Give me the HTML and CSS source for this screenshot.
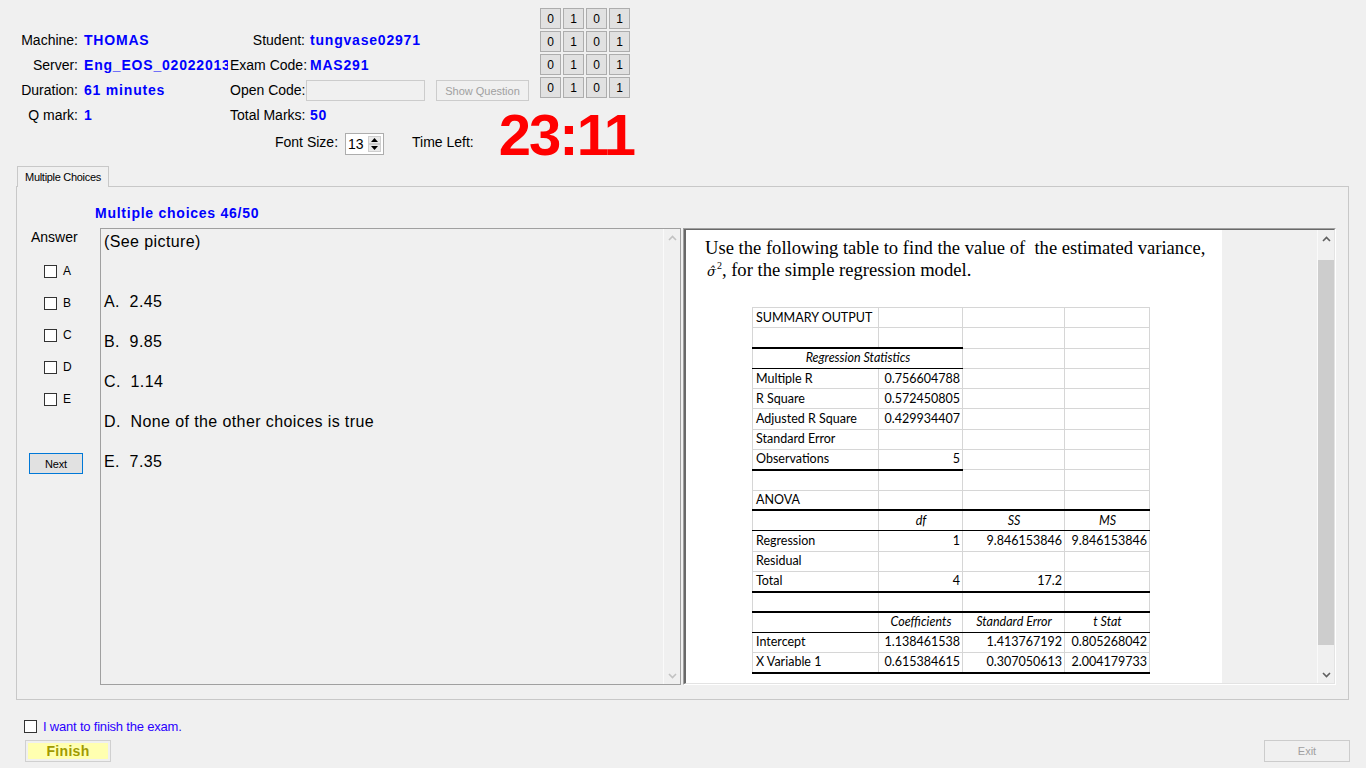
FILE: index.html
```html
<!DOCTYPE html>
<html>
<head>
<meta charset="utf-8">
<title>Exam</title>
<link rel="stylesheet" href="styles.css">
</head>
<body>
<header class="top">
  <div class="top-left">
    <div class="info">
      <span class="lbl">Machine:</span><span class="val c1">THOMAS</span><span class="lbl">Student:</span><span class="val c2">tungvase02971</span>
      <span class="lbl">Server:</span><span class="val c1">Eng_EOS_02022013</span><span class="lbl">Exam Code:</span><span class="val c2">MAS291</span>
      <span class="lbl">Duration:</span><span class="val c1">61 minutes</span><span class="lbl">Open Code:</span><span class="oc"><span class="oc-input"></span><button class="btn-dis">Show Question</button></span>
      <span class="lbl">Q mark:</span><span class="val c1">1</span><span class="lbl">Total Marks:</span><span class="val c2">50</span>
    </div>
    <div class="font-row">
      <span class="fr-lbl">Font Size:</span>
      <span class="spin"><span class="spin-val">13</span><span class="spin-btns"><span class="sb"><svg width="7" height="4" viewBox="0 0 7 4"><path d="M0 4 L3.5 0 L7 4 Z" fill="#000"/></svg></span><span class="sb"><svg width="7" height="4" viewBox="0 0 7 4"><path d="M0 0 L3.5 4 L7 0 Z" fill="#000"/></svg></span></span></span>
      <span class="fr-lbl time-lbl">Time Left:</span>
    </div>
  </div>
  <div class="top-right">
    <div class="bits">
      <span class="bit">0</span><span class="bit">1</span><span class="bit">0</span><span class="bit">1</span>
      <span class="bit">0</span><span class="bit">1</span><span class="bit">0</span><span class="bit">1</span>
      <span class="bit">0</span><span class="bit">1</span><span class="bit">0</span><span class="bit">1</span>
      <span class="bit">0</span><span class="bit">1</span><span class="bit">0</span><span class="bit">1</span>
    </div>
    <div class="timer">23:11</div>
  </div>
</header>

<section class="tabs">
  <div class="tab">Multiple Choices</div>
  <div class="panel">
    <div class="mc-title">Multiple choices 46/50</div>
    <div class="mc-body">
      <div class="answers">
        <div class="ans-title">Answer</div>
        <div class="opt"><span class="chk"></span><span class="opt-l">A</span></div>
        <div class="opt"><span class="chk"></span><span class="opt-l">B</span></div>
        <div class="opt"><span class="chk"></span><span class="opt-l">C</span></div>
        <div class="opt"><span class="chk"></span><span class="opt-l">D</span></div>
        <div class="opt"><span class="chk"></span><span class="opt-l">E</span></div>
        <button class="next">Next</button>
      </div>
      <div class="qbox">
        <div class="qtext">(See picture)


A.  2.45

B.  9.85

C.  1.14

D.  None of the other choices is true

E.  7.35</div>
        <div class="vscroll dis">
          <span class="arr"><svg width="9" height="6" viewBox="0 0 9 6"><path d="M1 5 L4.5 1.5 L8 5" fill="none" stroke="#c2c2c2" stroke-width="1.6"/></svg></span>
          <span class="track"></span>
          <span class="arr"><svg width="9" height="6" viewBox="0 0 9 6"><path d="M1 1 L4.5 4.5 L8 1" fill="none" stroke="#c2c2c2" stroke-width="1.6"/></svg></span>
        </div>
      </div>
      <div class="pic">
        <div class="pic-in">
          <div class="image">
            <div class="ptext">Use the following table to find the value of&nbsp; the estimated variance,<br><span class="sig">σ̂</span><sup>2</sup>, for the simple regression model.</div>
            <table class="xl">
              <colgroup><col class="w1"><col class="w2"><col class="w3"><col class="w4"></colgroup>
              <tr><td>SUMMARY OUTPUT</td><td></td><td></td><td></td></tr>
              <tr><td></td><td></td><td></td><td></td></tr>
              <tr><td colspan="2" class="hd top2 bot1">Regression Statistics</td><td></td><td></td></tr>
              <tr><td>Multiple R</td><td class="n">0.756604788</td><td></td><td></td></tr>
              <tr><td>R Square</td><td class="n">0.572450805</td><td></td><td></td></tr>
              <tr><td>Adjusted R Square</td><td class="n">0.429934407</td><td></td><td></td></tr>
              <tr><td>Standard Error</td><td></td><td></td><td></td></tr>
              <tr><td class="bot2">Observations</td><td class="n bot2">5</td><td></td><td></td></tr>
              <tr><td></td><td></td><td></td><td></td></tr>
              <tr><td>ANOVA</td><td></td><td></td><td></td></tr>
              <tr class="hdr"><td></td><td class="hd">df</td><td class="hd">SS</td><td class="hd">MS</td></tr>
              <tr><td>Regression</td><td class="n">1</td><td class="n">9.846153846</td><td class="n">9.846153846</td></tr>
              <tr><td>Residual</td><td></td><td></td><td></td></tr>
              <tr class="end"><td>Total</td><td class="n">4</td><td class="n">17.2</td><td></td></tr>
              <tr><td></td><td></td><td></td><td></td></tr>
              <tr class="hdr"><td></td><td class="hd">Coefficients</td><td class="hd">Standard Error</td><td class="hd">t Stat</td></tr>
              <tr><td>Intercept</td><td class="n">1.138461538</td><td class="n">1.413767192</td><td class="n">0.805268042</td></tr>
              <tr class="end"><td>X Variable 1</td><td class="n">0.615384615</td><td class="n">0.307050613</td><td class="n">2.004179733</td></tr>
            </table>
          </div>
          <div class="filler"></div>
          <div class="vscroll">
            <span class="arr"><svg width="9" height="6" viewBox="0 0 9 6"><path d="M1 5 L4.5 1.5 L8 5" fill="none" stroke="#606060" stroke-width="1.6"/></svg></span>
            <span class="track"><span class="thumb"></span></span>
            <span class="arr"><svg width="9" height="6" viewBox="0 0 9 6"><path d="M1 1 L4.5 4.5 L8 1" fill="none" stroke="#606060" stroke-width="1.6"/></svg></span>
          </div>
        </div>
      </div>
    </div>
  </div>
</section>

<footer class="bottom">
  <div class="fin-row"><span class="chk"></span><span class="fin-lbl">I want to finish the exam.</span></div>
  <div class="btn-row">
    <button class="finish"><span class="finish-in">Finish</span></button>
    <button class="exit">Exit</button>
  </div>
</footer>
</body>
</html>
```

FILE: styles.css
```css
* { box-sizing: border-box; }
html, body { margin: 0; padding: 0; }
body {
  width: 1366px;
  height: 768px;
  overflow: hidden;
  background: #f0f0f0;
  font-family: "Liberation Sans", Arial, sans-serif;
  font-size: 14px;
  color: #000;
}
button { font-family: "Liberation Sans", Arial, sans-serif; padding: 0; margin: 0; }

/* ---------- header ---------- */
.top { display: flex; height: 166px; }
.top-left { width: 540px; }
.info {
  display: grid;
  grid-template-columns: 78px 152px 75px auto;
  grid-auto-rows: 25px;
  margin-top: 28px;
}
.lbl { text-align: right; line-height: 25px; white-space: nowrap; }
.val {
  color: #0000ff;
  font-weight: bold;
  letter-spacing: 0.8px;
  line-height: 25px;
  white-space: nowrap;
  overflow: hidden;
}
.val.c1 { padding-left: 6px; margin-right: 2px; }
.val.c2 { padding-left: 5px; }
.oc { display: flex; align-items: center; padding-left: 1px; }
.oc-input {
  width: 119px;
  height: 21px;
  border: 1px solid #cccccc;
  background: #f0f0f0;
}
.btn-dis {
  margin-left: 11px;
  width: 93px;
  height: 21px;
  border: 1px solid #cccccc;
  background: #f0f0f0;
  color: #a0a0a0;
  font-size: 11px;
}
.font-row {
  display: flex;
  align-items: flex-start;
  height: 22px;
  margin-top: 5px;
  margin-left: 275px;
}
.fr-lbl { line-height: 18px; }
.spin {
  margin-left: 7px;
  width: 39px;
  height: 22px;
  border: 1px solid #adadad;
  background: #fff;
  display: flex;
}
.spin-val { flex: 1; padding-left: 2px; line-height: 20px; }
.spin-btns {
  width: 13px;
  margin: 2px 2px 2px 0;
  display: flex;
  flex-direction: column;
}
.sb {
  flex: 1;
  border: 1px solid #cfcfcf;
  background: #eaeaea;
  display: flex;
  align-items: center;
  justify-content: center;
}
.time-lbl { margin-left: 28px; }

.top-right {
  width: 90px;
  display: flex;
  flex-direction: column;
  align-items: flex-end;
}
.bits {
  margin-top: 8px;
  display: grid;
  grid-template-columns: repeat(4, 21px);
  grid-auto-rows: 21px;
  gap: 2px;
}
.bit {
  border: 1px solid #adadad;
  background: #e1e1e1;
  font-size: 12px;
  display: flex;
  align-items: center;
  justify-content: center;
}
.timer {
  margin-top: 8px;
  margin-right: -4px;
  color: #ff0000;
  font-weight: bold;
  font-size: 58px;
  line-height: 58px;
  letter-spacing: -2px;
  white-space: nowrap;
}

/* ---------- tab control ---------- */
.tabs { margin-left: 16px; width: 1333px; }
.tab {
  position: relative;
  z-index: 1;
  margin-left: 1px;
  margin-bottom: -1px;
  width: 92px;
  height: 21px;
  border: 1px solid #c8c8c8;
  border-bottom: none;
  background: #f0f0f0;
  font-size: 11px;
  letter-spacing: -0.3px;
  display: flex;
  align-items: center;
  justify-content: center;
}
.panel {
  height: 514px;
  border: 1px solid #c8c8c8;
  background: #f0f0f0;
  padding-top: 17px;
  padding-right: 12px;
}
.mc-title {
  margin-left: 78px;
  line-height: 18px;
  color: #0000ff;
  font-weight: bold;
  letter-spacing: 0.75px;
}
.mc-body { display: flex; height: 457px; margin-top: 6px; }

.answers { width: 83px; display: flex; flex-direction: column; align-items: flex-start; }
.ans-title { padding-left: 14px; line-height: 18px; }
.opt {
  height: 32px;
  display: flex;
  align-items: center;
  padding-left: 27px;
}
.ans-title + .opt { margin-top: 9px; }
.chk {
  width: 13px;
  height: 13px;
  border: 1px solid #333;
  background: #fff;
  flex: none;
}
.opt-l { margin-left: 6px; font-size: 12px; line-height: 12px; margin-top: -1px; }
.next {
  margin-top: 38px;
  margin-left: 12px;
  width: 54px;
  height: 21px;
  border: 1px solid #0078d7;
  background: #e1e1e1;
  font-size: 11px;
  letter-spacing: -0.2px;
}

.qbox {
  width: 581px;
  border: 1px solid #a0a0a0;
  background: #f0f0f0;
  display: flex;
}
.qtext {
  flex: 1;
  padding: 3px 3px;
  font-size: 16px;
  line-height: 20px;
  letter-spacing: 0.4px;
  white-space: pre-wrap;
}
.vscroll {
  width: 17px;
  display: flex;
  flex-direction: column;
  background: #f0f0f0;
  border-left: 1px solid #fafafa;
}
.arr {
  height: 17px;
  display: flex;
  align-items: center;
  justify-content: center;
  flex: none;
}
.track { flex: 1; display: flex; flex-direction: column; }
.thumb {
  margin-top: 13px;
  height: 385px;
  background: #cdcdcd;
}

.pic {
  margin-left: 2px;
  width: 653px;
  border: 1px solid;
  border-color: #a0a0a0 #ffffff #ffffff #a0a0a0;
}
.pic-in {
  height: 100%;
  display: flex;
  border-style: solid;
  border-width: 1px 1px 1px 2px;
  border-color: #696969 #e3e3e3 #e3e3e3 #696969;
  background: #f0f0f0;
}
.image {
  width: 536px;
  background: #fff;
  overflow: hidden;
  padding: 7px 0 0 19px;
}
.filler { flex: 1; }
.ptext {
  font-family: "Liberation Serif", "Times New Roman", serif;
  font-size: 18.6px;
  line-height: 22px;
  white-space: nowrap;
}
.sig {
  font-family: "DejaVu Serif", serif;
  font-style: italic;
  font-size: 13px;
  margin-left: 2px;
}
.ptext sup { font-size: 10px; line-height: 0; vertical-align: 7px; margin-left: 1px; }

.xl {
  margin-top: 24px;
  margin-left: 47px;
  border-collapse: collapse;
  table-layout: fixed;
  width: 397px;
  font-family: Lato, "Liberation Sans", sans-serif;
  font-size: 12.5px;
}
.w1 { width: 126px; }
.w2 { width: 84px; }
.w3 { width: 102px; }
.w4 { width: 85px; }
.xl td {
  height: 20.3px;
  padding: 0 2px 0 3px;
  border: 1px solid #d6d6d6;
  white-space: nowrap;
  overflow: hidden;
  line-height: 16px;
}
.xl td.n { text-align: right; }
.xl td.hd { text-align: center; font-style: italic; }
.xl td.top2 { border-top: 2px solid #000; }
.xl td.bot1 { border-bottom: 1px solid #000; }
.xl td.bot2 { border-bottom: 2px solid #000; }
.xl tr.hdr td { border-top: 2px solid #000; border-bottom: 1px solid #000; }
.xl tr.end td { border-bottom: 2px solid #000; }

/* ---------- bottom ---------- */
.bottom { padding: 20px 16px 0 24px; }
.fin-row { display: flex; align-items: center; height: 13px; }
.fin-lbl {
  margin-left: 6px;
  font-size: 13px;
  color: #2a00ff;
  letter-spacing: -0.2px;
}
.btn-row { display: flex; justify-content: space-between; margin-top: 7px; }
.finish {
  margin-left: 1px;
  width: 86px;
  height: 22px;
  border: 1px solid #d0d0d0;
  background: #f0f0f0;
  padding: 2px;
  display: flex;
}
.finish-in {
  flex: 1;
  background: #ffffb0;
  color: #a09a00;
  font-weight: bold;
  font-size: 14px;
  letter-spacing: 0.3px;
  display: flex;
  align-items: center;
  justify-content: center;
}
.exit {
  width: 86px;
  height: 22px;
  border: 1px solid #cccccc;
  background: #f0f0f0;
  color: #a0a0a0;
  font-size: 11px;
}
```
